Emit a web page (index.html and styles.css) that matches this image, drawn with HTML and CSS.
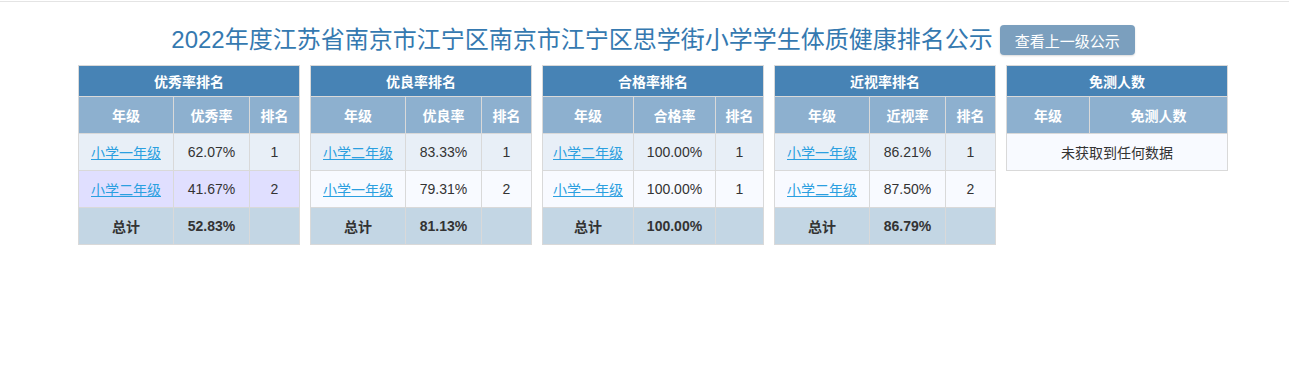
FILE: index.html
```html
<!DOCTYPE html>
<html lang="zh-CN">
<head>
<meta charset="utf-8">
<title>体质健康排名公示</title>
<link rel="stylesheet" href="styles.css">
</head>
<body>
<div class="topline"></div>
<div class="wrap">
  <div class="title-row">
    <h1 class="title">2022年度江苏省南京市江宁区南京市江宁区思学街小学学生体质健康排名公示</h1>
    <a class="btn">查看上一级公示</a>
  </div>
  <div class="tables">
    <table class="rank">
      <colgroup><col class="w-grade"><col class="w-value"><col></colgroup>
      <tr class="head"><th colspan="3">优秀率排名</th></tr>
      <tr class="sub"><th>年级</th><th>优秀率</th><th>排名</th></tr>
      <tr class="odd"><td><a>小学一年级</a></td><td>62.07%</td><td>1</td></tr>
      <tr class="hover"><td><a>小学二年级</a></td><td>41.67%</td><td>2</td></tr>
      <tr class="total"><td>总计</td><td>52.83%</td><td></td></tr>
    </table>
    <table class="rank">
      <colgroup><col class="w-grade"><col class="w-value"><col></colgroup>
      <tr class="head"><th colspan="3">优良率排名</th></tr>
      <tr class="sub"><th>年级</th><th>优良率</th><th>排名</th></tr>
      <tr class="odd"><td><a>小学二年级</a></td><td>83.33%</td><td>1</td></tr>
      <tr class="even"><td><a>小学一年级</a></td><td>79.31%</td><td>2</td></tr>
      <tr class="total"><td>总计</td><td>81.13%</td><td></td></tr>
    </table>
    <table class="rank rank-wide">
      <colgroup><col class="w-grade"><col class="w-value"><col></colgroup>
      <tr class="head"><th colspan="3">合格率排名</th></tr>
      <tr class="sub"><th>年级</th><th>合格率</th><th>排名</th></tr>
      <tr class="odd"><td><a>小学二年级</a></td><td>100.00%</td><td>1</td></tr>
      <tr class="even"><td><a>小学一年级</a></td><td>100.00%</td><td>1</td></tr>
      <tr class="total"><td>总计</td><td>100.00%</td><td></td></tr>
    </table>
    <table class="rank">
      <colgroup><col class="w-grade"><col class="w-value"><col></colgroup>
      <tr class="head"><th colspan="3">近视率排名</th></tr>
      <tr class="sub"><th>年级</th><th>近视率</th><th>排名</th></tr>
      <tr class="odd"><td><a>小学一年级</a></td><td>86.21%</td><td>1</td></tr>
      <tr class="even"><td><a>小学二年级</a></td><td>87.50%</td><td>2</td></tr>
      <tr class="total"><td>总计</td><td>86.79%</td><td></td></tr>
    </table>
    <table class="rank rank-exempt">
      <colgroup><col class="w-grade2"><col></colgroup>
      <tr class="head"><th colspan="2">免测人数</th></tr>
      <tr class="sub"><th>年级</th><th>免测人数</th></tr>
      <tr class="even"><td colspan="2">未获取到任何数据</td></tr>
    </table>
  </div>
</div>
</body>
</html>
```

FILE: styles.css
```css
html, body {
  margin: 0;
  padding: 0;
  background: #ffffff;
  font-family: "Liberation Sans", "Noto Sans CJK SC", sans-serif;
  color: #333333;
}

.topline {
  height: 1px;
  border-bottom: 1px solid #e4e4e4;
}

.wrap {
  width: 1150px;
  margin-left: 78px;
}

.title-row {
  margin-top: 23px;
  height: 30px;
  display: flex;
  align-items: center;
  justify-content: center;
  gap: 7px;
}

.title {
  margin: 0;
  font-size: 24px;
  font-weight: normal;
  color: #3579b0;
  white-space: nowrap;
  line-height: 30px;
}

.btn {
  display: flex;
  align-items: center;
  height: 30px;
  padding: 0 15px;
  box-sizing: border-box;
  border-radius: 4px;
  background: #7b9fbe;
  color: #ffffff;
  font-size: 15px;
  white-space: nowrap;
  box-shadow: 0 1px 2px rgba(0, 0, 0, 0.15);
}

.tables {
  margin-top: 10px;
  display: flex;
  align-items: flex-start;
  gap: 10px;
}

.rank {
  width: 222px;
  flex: none;
  border-collapse: collapse;
  table-layout: fixed;
  border: 1px solid #d9d9d9;
  font-size: 14px;
}

.rank th,
.rank td {
  border: 1px solid #d9d9d9;
  text-align: center;
  vertical-align: middle;
  padding: 0;
}

.w-grade { width: 95px; }
.w-value { width: 76px; }

.rank-wide .w-grade { width: 91px; }
.rank-wide .w-value { width: 82px; }

.w-grade2 { width: 83px; }

.head th {
  height: 30px;
  background: #4783b5;
  color: #ffffff;
  font-weight: bold;
}

.sub th {
  height: 36px;
  background: #8db0cf;
  color: #ffffff;
  font-weight: bold;
}

.rank td {
  height: 36px;
}

.odd td { background: #e8eff7; }
.even td { background: #f8faff; }
.hover td { background: #e0dfff; }

.total td {
  background: #c3d6e4;
  font-weight: bold;
}

.rank a {
  color: #2b9fe0;
  text-decoration: underline;
  cursor: pointer;
}
```
